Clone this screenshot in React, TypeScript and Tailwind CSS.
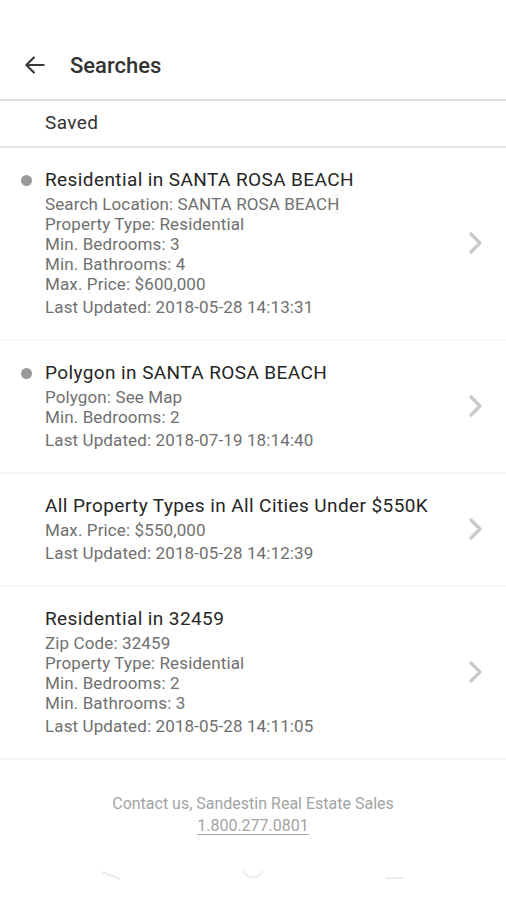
import React from "react";

type Item = { title: string; dot: boolean; lines: string[]; updated: string };

const items: Item[] = [
  {
    title: "Residential in SANTA ROSA BEACH",
    dot: true,
    lines: [
      "Search Location: SANTA ROSA BEACH",
      "Property Type: Residential",
      "Min. Bedrooms: 3",
      "Min. Bathrooms: 4",
      "Max. Price: $600,000",
    ],
    updated: "Last Updated: 2018-05-28 14:13:31",
  },
  {
    title: "Polygon in SANTA ROSA BEACH",
    dot: true,
    lines: ["Polygon: See Map", "Min. Bedrooms: 2"],
    updated: "Last Updated: 2018-07-19 18:14:40",
  },
  {
    title: "All Property Types in All Cities Under $550K",
    dot: false,
    lines: ["Max. Price: $550,000"],
    updated: "Last Updated: 2018-05-28 14:12:39",
  },
  {
    title: "Residential in 32459",
    dot: false,
    lines: [
      "Zip Code: 32459",
      "Property Type: Residential",
      "Min. Bedrooms: 2",
      "Min. Bathrooms: 3",
    ],
    updated: "Last Updated: 2018-05-28 14:11:05",
  },
];

function Chevron() {
  return (
    <svg width="18" height="22" viewBox="0 0 18 22" fill="none">
      <polyline
        points="4,2 13,11 4,20"
        stroke="#c9c9c9"
        strokeWidth="3.2"
        strokeLinecap="round"
        strokeLinejoin="round"
      />
    </svg>
  );
}

export default function App() {
  return (
    <div
      className="w-[506px] h-[900px] bg-white overflow-hidden flex flex-col"
      style={{ fontFamily: "Roboto, 'Noto Sans', sans-serif" }}
    >
      <div className="h-[101px] pt-[31px] flex items-center border-b-2 border-[#dcdcdc]">
        <div className="w-[70px] flex justify-start pl-[22px]">
          <svg width="26" height="26" viewBox="0 0 24 24" fill="none">
            <path
              d="M20 12H4.5M11 5l-7 7 7 7"
              stroke="#3a3a3a"
              strokeWidth="2"
              strokeLinecap="round"
              strokeLinejoin="round"
            />
          </svg>
        </div>
        <div className="text-[22px] font-medium text-[#333333]">Searches</div>
      </div>
      <div className="h-[47px] flex items-center pl-[45px] border-b-2 border-[#e2e2e2] text-[19px] tracking-[0.4px] text-[#333333]">
        Saved
      </div>
      {items.map((it, i) => (
        <div
          key={i}
          className="flex items-center pt-[20px] pb-[22px] border-b-[2px] border-[#f6f6f6]"
        >
          <div className="w-[45px] self-start flex justify-start pl-[21px] pt-[7px]">
            {it.dot ? <div className="w-[11px] h-[11px] rounded-full bg-[#9a9a9a]" /> : null}
          </div>
          <div className="flex-1 flex flex-col">
            <div className="text-[19px] leading-[24px] tracking-[0.4px] text-[#262626]">{it.title}</div>
            <div className="mt-[2px] flex flex-col">
              {it.lines.map((l, j) => (
                <div key={j} className="text-[17px] leading-[20px] tracking-[0.12px] text-[#707070]">
                  {l}
                </div>
              ))}
              <div className="mt-[3px] text-[17px] leading-[20px] tracking-[0.12px] text-[#707070]">{it.updated}</div>
            </div>
          </div>
          <div className="w-[50px] flex justify-start pl-[11px]">
            <Chevron />
          </div>
        </div>
      ))}
      <div className="flex flex-col items-center pt-[33px] text-[16px] leading-[22px] text-[#a3a3a3]">
        <div>Contact us, Sandestin Real Estate Sales</div>
        <div className="underline underline-offset-[3px]">1.800.277.0801</div>
      </div>
      <div className="flex justify-between px-[100px] mt-[33px]">
        <svg width="22" height="10" viewBox="0 0 22 10">
          <path d="M2 2 L20 9" stroke="#ececec" strokeWidth="2" />
        </svg>
        <svg width="24" height="10" viewBox="0 0 24 10">
          <path d="M2 1 Q12 14 22 1" stroke="#ececec" strokeWidth="2" fill="none" />
        </svg>
        <svg width="22" height="10" viewBox="0 0 22 10">
          <path d="M2 8 L20 8" stroke="#ececec" strokeWidth="2" />
        </svg>
      </div>
    </div>
  );
}
